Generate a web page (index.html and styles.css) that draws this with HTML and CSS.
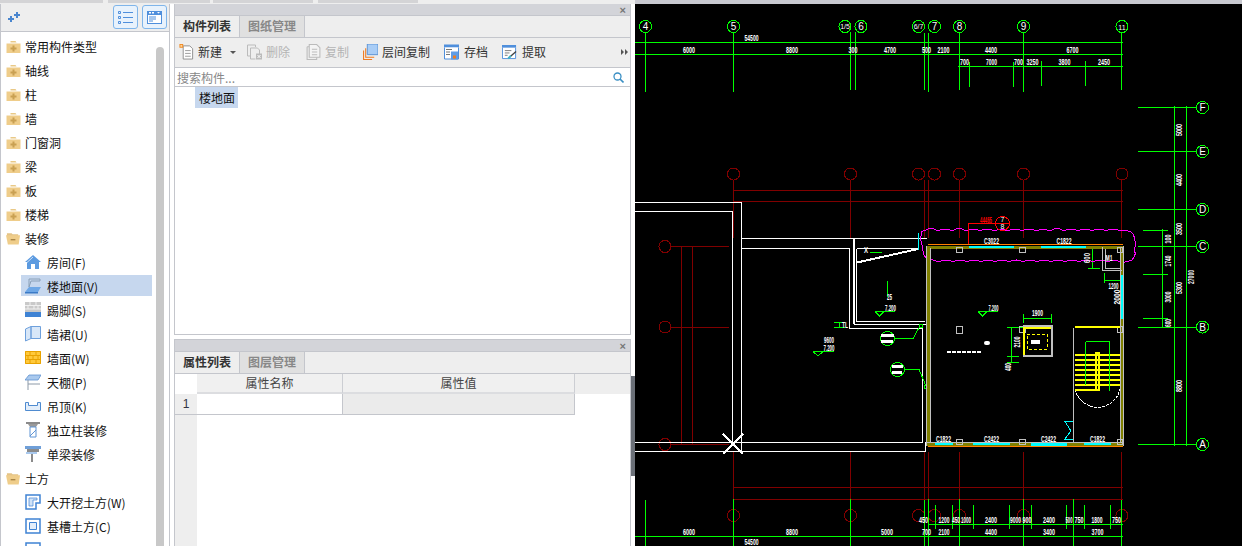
FILE: index.html
```html
<!DOCTYPE html>
<html lang="zh">
<head>
<meta charset="utf-8">
<title>构件列表</title>
<link rel="stylesheet" href="styles.css">
</head>
<body>
<svg class="sprite" aria-hidden="true">
  <defs>
    <symbol id="folder" viewBox="0 0 14 13"><path d="M4 1h5l1 1.5H4z" fill="#e9c987"/><path d="M0 3.500h14V13H0z" fill="#efcd8a"/><path d="M6 5.500h2v2h2v2H8v2H6v-2H4v-2h2z" fill="#c9a052"/></symbol>
    <symbol id="folder-open" viewBox="0 0 16 13"><path d="M1 1h5l1 1h6v2H1z" fill="#e4c386"/><path d="M0 3h15l-1.500 10H2z" fill="#efcd8a"/><path d="M5 7h5v1.500H5z" fill="#a98647"/></symbol>
    <symbol id="i-room" viewBox="0 0 16 16"><path d="M8 1L0 8h2v7h4v-5h4v5h4V8h2z" fill="#5b9ae0"/><path d="M8 3L2 8.500" stroke="#cfe2f7" fill="none"/></symbol>
    <symbol id="i-floor" viewBox="0 0 16 16"><path d="M4 1h11v2H6L4 9z" fill="none" stroke="#8aa0b8"/><path d="M4 9h12l-3 5H0z" fill="#6ea7e6"/><path d="M0 14h13v1.500H0z" fill="#3b7ac6"/></symbol>
    <symbol id="i-base" viewBox="0 0 16 16"><path d="M0 0h16v10H0z" fill="#c9c9c9"/><path d="M0 3.500h16M0 7h16M5 0v3.500M11 0v3.500M3 3.500V7M9 3.500V7M13 3.500V7" stroke="#f0f0f0" fill="none"/><path d="M0 10h16v5H0z" fill="#3f83d4"/></symbol>
    <symbol id="i-dado" viewBox="0 0 16 16"><path d="M.5 3L6 .5v12L.5 15zM6 .5h9.500V12.500H6z" fill="#d8e7f8" stroke="#6ea0dc"/></symbol>
    <symbol id="i-wall" viewBox="0 0 16 14"><path d="M0 0h16v13H0z" fill="#ffc93c"/><path d="M.5.5h15v12H.5zM0 4.500h16M0 8.500h16M5 .5v4M11 .5v4M3 4.500v4M8 4.500v4M13 4.500v4M5 8.500v4M11 8.500v4" fill="none" stroke="#e8a200"/></symbol>
    <symbol id="i-ceil" viewBox="0 0 16 16"><path d="M4 1h12l-3 5H0z" fill="#a9c9ee" stroke="#5f92cf" stroke-width=".8"/><path d="M3 6v10M3 10h12" stroke="#8d9aa8" fill="none"/></symbol>
    <symbol id="i-hang" viewBox="0 0 16 16"><path d="M.5 4.500h3v3h9v-3h3v8H.5z" fill="#e3eefa" stroke="#4f8bd0"/></symbol>
    <symbol id="i-col" viewBox="0 0 16 16"><path d="M1 0h14v2H1z" fill="#8b8b8b"/><path d="M3 2h10l-2 3H5z" fill="#9a9a9a"/><path d="M5 5h6v10H5z" fill="#fff" stroke="#5e94d4"/><path d="M5 14l6-6" stroke="#5e94d4"/></symbol>
    <symbol id="i-beam" viewBox="0 0 16 16"><path d="M0 0h16v3H0z" fill="#6f9fd8"/><path d="M2 3h12v3H2z" fill="#8b8b8b"/><path d="M1 6h11v2H1z" fill="#a9c9ee"/><path d="M7 8v8" stroke="#8b8b8b" stroke-width="2"/></symbol>
    <symbol id="i-dig" viewBox="0 0 16 16"><path d="M1 1h14v8h-4v6H1z" fill="#fff" stroke="#3f83d4" stroke-width="1.500"/><path d="M4 4h8v2H8v6H4z" fill="#cfe2f7" stroke="#3f83d4" stroke-width=".7"/></symbol>
    <symbol id="i-trench" viewBox="0 0 16 16"><path d="M1 1h14v14H1z" fill="#fff" stroke="#3f83d4" stroke-width="1.500"/><path d="M4.500 4.500h7v7h-7z" fill="#e3eefa" stroke="#3f83d4"/></symbol>
    <symbol id="t-new" viewBox="0 0 15 17"><path d="M4 2h7l3 3v11H4z" fill="#fff" stroke="#8e8e8e"/><path d="M6 7h6M6 10h6M6 13h6" stroke="#9a9a9a"/><path d="M0 0h4v4H0z" fill="#f08a24"/><path d="M1 1h2v2H1z" fill="#ffd79c"/></symbol>
    <symbol id="t-del" viewBox="0 0 15 15"><path d="M.5.5h8v2M.5.5v11h3" fill="none" stroke="#bbb"/><path d="M3.500 3.500h7l2 2v4M3.500 3.500v11h5" fill="none" stroke="#bbb"/><path d="M9 9h6v6H9z" fill="#bbb"/><path d="M10.500 10.500l3 3m0-3l-3 3" stroke="#fff"/></symbol>
    <symbol id="t-copy" viewBox="0 0 13 15"><path d="M.5 2.500h2M.5 2.500v12h9v-2" fill="none" stroke="#bbb"/><path d="M2.500.5h7l3 3v9h-10z" fill="#f4f4f4" stroke="#bbb"/><path d="M5 5h5M5 7.500h5M5 10h5" stroke="#bbb"/></symbol>
    <symbol id="t-floor" viewBox="0 0 14 15"><path d="M.5 6v8.500h8M2.500 4v8.500h8" fill="none" stroke="#ee7b22"/><path d="M4 0h10v10H4z" fill="#a9cdf6" stroke="#4f8bd0" stroke-width=".8"/></symbol>
    <symbol id="t-save" viewBox="0 0 15 15"><path d="M0 0h15v3H0z" fill="#4f8fdc"/><path d="M.5 3v11.500h14V3" fill="#fff" stroke="#4f8fdc"/><path d="M2 5h6M2 7.500h4M2 10h4" stroke="#777"/><path d="M7 7h7v8H7z" fill="#5f9de6"/><path d="M9 11h3v3H9z" fill="#f07d20"/></symbol>
    <symbol id="t-pick" viewBox="0 0 16 15"><path d="M0 0h15v3H0z" fill="#4f8fdc"/><path d="M.5 3v11.500h14V3" fill="#fff" stroke="#4f8fdc"/><path d="M3 6h7M3 8.500h5M3 11h3" stroke="#777"/><path d="M7 14l8-7" stroke="#444" stroke-width="1.500"/><path d="M6.500 14.500l3-3" stroke="#3fb6c6" stroke-width="2"/></symbol>
  </defs>
</svg>
<div class="app">
  <div class="strip"><span class="seg seg-a"></span><span class="seg seg-b"></span><span class="seg seg-c"></span><span class="seg seg-d"></span><span class="seg seg-e"></span></div>
  <div class="main">
    <aside class="tree-panel">
      <div class="tree-bar">
        <svg class="sparkle" viewBox="0 0 13 10"><path d="M3 4h2v2h2v2H5v2H3V8H1V6h2zM9 0h2v2h2v2h-2v2H9V4H7V2h2z" fill="#4a86cf"/></svg>
        <span class="spacer"></span>
        <button class="view-btn"><svg viewBox="0 0 15 13" class="view-ic"><path d="M.5.5h2v2h-2zM.5 5.500h2v2h-2zM.5 10.500h2v2h-2z" fill="none" stroke="#4f8fdc"/><path d="M5 1.500h10M5 6.500h10M5 11.500h10" stroke="#4f8fdc"/></svg></button>
        <button class="view-btn"><svg viewBox="0 0 15 13" class="view-ic"><path d="M0 0h15v13H0z" fill="#4f8fdc"/><path d="M1 4h13v8H1z" fill="#fff"/><path d="M2 6h7M2 8h7M2 10h4" stroke="#4f8fdc"/><path d="M2 1h2v1.500H2zM5 1h2v1.500H5zM10 1h3l-1.500 1.500z" fill="#fff"/></svg></button>
      </div>
      <div class="tree-body">
        <ul class="tree">
          <li class="row"><svg class="fold"><use href="#folder"/></svg>常用构件类型</li>
          <li class="row"><svg class="fold"><use href="#folder"/></svg>轴线</li>
          <li class="row"><svg class="fold"><use href="#folder"/></svg>柱</li>
          <li class="row"><svg class="fold"><use href="#folder"/></svg>墙</li>
          <li class="row"><svg class="fold"><use href="#folder"/></svg>门窗洞</li>
          <li class="row"><svg class="fold"><use href="#folder"/></svg>梁</li>
          <li class="row"><svg class="fold"><use href="#folder"/></svg>板</li>
          <li class="row"><svg class="fold"><use href="#folder"/></svg>楼梯</li>
          <li class="row"><svg class="fold"><use href="#folder-open"/></svg>装修</li>
          <li class="row child"><svg class="leaf"><use href="#i-room"/></svg>房间(F)</li>
          <li class="row child selected"><svg class="leaf"><use href="#i-floor"/></svg>楼地面(V)</li>
          <li class="row child"><svg class="leaf"><use href="#i-base"/></svg>踢脚(S)</li>
          <li class="row child"><svg class="leaf"><use href="#i-dado"/></svg>墙裙(U)</li>
          <li class="row child"><svg class="leaf"><use href="#i-wall"/></svg>墙面(W)</li>
          <li class="row child"><svg class="leaf"><use href="#i-ceil"/></svg>天棚(P)</li>
          <li class="row child"><svg class="leaf"><use href="#i-hang"/></svg>吊顶(K)</li>
          <li class="row child"><svg class="leaf"><use href="#i-col"/></svg>独立柱装修</li>
          <li class="row child"><svg class="leaf"><use href="#i-beam"/></svg>单梁装修</li>
          <li class="row"><svg class="fold"><use href="#folder-open"/></svg>土方</li>
          <li class="row child"><svg class="leaf"><use href="#i-dig"/></svg>大开挖土方(W)</li>
          <li class="row child"><svg class="leaf"><use href="#i-trench"/></svg>基槽土方(C)</li>
          <li class="row child"><svg class="leaf"><use href="#i-trench"/></svg></li>
        </ul>
        <div class="scroll"></div>
      </div>
    </aside>

    <section class="mid">
      <div class="panel panel-top">
        <div class="title-bar"><span class="close">×</span></div>
        <div class="tabs"><span class="tab active">构件列表</span><span class="tab">图纸管理</span></div>
        <div class="tools">
          <span class="tool t1"><svg class="tic"><use href="#t-new"/></svg>新建<i class="caret"></i></span>
          <span class="tool off t2"><svg class="tic"><use href="#t-del"/></svg>删除</span>
          <span class="tool off t3"><svg class="tic"><use href="#t-copy"/></svg>复制</span>
          <span class="tool t4"><svg class="tic"><use href="#t-floor"/></svg>层间复制</span>
          <span class="tool t5"><svg class="tic"><use href="#t-save"/></svg>存档</span>
          <span class="tool t6"><svg class="tic"><use href="#t-pick"/></svg>提取</span>
          <svg class="more" viewBox="0 0 7 6"><path d="M0 0l3 3-3 3zM4 0l3 3-3 3z" fill="#555"/></svg>
        </div>
        <div class="search"><span class="ph">搜索构件...</span><svg class="mag" viewBox="0 0 11 11"><circle cx="4.500" cy="4.500" r="3.500" fill="none" stroke="#3a8fc4" stroke-width="1.300"/><path d="M7 7l3.500 3.500" stroke="#3a8fc4" stroke-width="1.600"/></svg></div>
        <div class="list"><span class="list-item">楼地面</span></div>
      </div>
      <div class="panel panel-bot">
        <div class="title-bar"><span class="close">×</span></div>
        <div class="tabs"><span class="tab active">属性列表</span><span class="tab">图层管理</span></div>
        <div class="grid">
          <div class="g-corner"></div>
          <div class="g-head">属性名称</div>
          <div class="g-head">属性值</div>
          <div class="g-fill"></div>
          <div class="g-num">1</div>
          <div class="g-cell"></div>
          <div class="g-cell shade"></div>
          <div class="g-blank"></div>
          <div class="g-rest"></div>
          <div class="g-empty"></div>
        </div>
      </div>
    </section>

    <div class="gutter"><div class="handle"></div></div>

    <div class="cad">
      <svg class="cad-svg" viewBox="635 4 607 542" xmlns="http://www.w3.org/2000/svg">
        <!-- dark red axis layer -->
        <g class="ln dred">
          <circle cx="733.5" cy="174" r="6"/><circle cx="850.5" cy="174" r="6"/><circle cx="918.5" cy="174" r="6"/><circle cx="934.5" cy="174" r="6"/><circle cx="959.5" cy="174" r="6"/><circle cx="1023.5" cy="174" r="6"/><circle cx="1122" cy="174" r="6"/>
          <circle cx="733.5" cy="515.500" r="6"/><circle cx="850.5" cy="515.500" r="6"/><circle cx="918.5" cy="515.500" r="6"/><circle cx="934.5" cy="515.500" r="6"/><circle cx="959.5" cy="515.500" r="6"/><circle cx="1023.5" cy="515.500" r="6"/><circle cx="1122" cy="515.500" r="6"/>
          <circle cx="665" cy="246.500" r="6"/><circle cx="665" cy="327" r="6"/><circle cx="665" cy="444.500" r="6"/>
          <path d="M733.5 180V238M850.5 180V238M924.5 180V238M928.5 180V238M959.5 180V238M1023.5 180V238M1121.5 180V238M733 190.500H1122.500M733 201.500H1122.500M671 246.500H728.500M671 327.500H728.500M671 444.500H728.500M681.500 246V444M692.500 246V444M733.5 452V499M850.5 452V499M924.500 452V505M928.500 452V499M959.5 452V499M1023.5 452V499M1121.5 452V499M733 487.500H1122.500M733 499.500H1122.500"/>
        </g>
        <!-- white building outline -->
        <g class="ln white">
          <path d="M635 202.500H741.500V451.500M635 211.500H732.500V442.500M635 442.500H922.500V328.500H849.500V248.500H741.500M635 451.500H925.500V442M741.500 238.500H926.500M854 238.500V324.500H926M856.500 248.500V321.500H925M856.500 248.500H917"/>
          <path class="thick" d="M723 434L743 454M743 434L723 454M857 262.500L918 249M853.500 238.500V324"/>
          <path d="M1075 389a23 23 0 0 0 45 0" stroke-dasharray="3 1"/>
        </g>
        <!-- green axis layer -->
        <g class="ln green">
          <circle cx="645.5" cy="26.500" r="6"/><circle cx="733.5" cy="26.500" r="6"/><circle cx="845" cy="26.500" r="6"/><circle cx="861" cy="26.500" r="6"/><circle cx="918.5" cy="26.500" r="6"/><circle cx="934.500" cy="26.500" r="6"/><circle cx="959.5" cy="26.500" r="6"/><circle cx="1023.5" cy="26.500" r="6"/><circle cx="1122" cy="26.500" r="6"/>
          <circle cx="1202.500" cy="107.500" r="6"/><circle cx="1202.500" cy="151.500" r="6"/><circle cx="1202.500" cy="209.500" r="6"/><circle cx="1202.500" cy="246.500" r="6"/><circle cx="1202.500" cy="327" r="6"/><circle cx="1202.500" cy="444.500" r="6"/>
          <circle cx="887.5" cy="338.500" r="7"/><circle cx="897.500" cy="369.500" r="7"/>
          <path d="M645.5 33V92M733.5 33V92M850.5 32V90M855.5 32V90M924.5 33V90M928.5 33V92M959.5 33V90M1023.5 33V92M1121.5 33V90M635 42.500H1122.500M635 54.500H1122.500M958 66.500H1123M969.5 62V87M1013.5 62V87M1041.5 61V86M1085.5 61V86"/>
          <path d="M1138 107.500H1196M1138 151.500H1196M1138 209.500H1196M1138 246.500H1196M1138 327.500H1196M1138 444.500H1196M1174.500 106V446M1186.500 106V446M1162.500 229V327M1143 230.500H1168M1143 274.500H1168M1143 318.500H1168"/>
          <path d="M645.5 500V546M733.5 499V546M850.5 499V546M924.5 500V546M928.5 499V546M959.5 499V546M1023.5 499V546M1073.5 499V546M1121.5 500V546M635 536.500H1122.500M928 524.500H1122.500M935.5 505V529M952.5 505V529M973.5 505V529M1009.5 505V529M1031.5 505V529M1066.500 505V529M1084.500 505V529M1110.500 505V529"/>
          <path d="M894 338.500H913L920 326M904 369.500H919L926 386M870 252.500H882M887.500 281V297M875 311.500H895M875 311.500L879.500 316L884 311.500M834 322.500H845M834 327.500H845M839.500 322.500V327.500M813 351.500H834M813 351.500L818 356L823 351.500"/>
          <path d="M978 311.500H998M978 311.500L982.500 316L987 311.500M1023.500 318.500H1051.500M1023.500 314V323M1051.500 314V323M1007 327.500H1023M1011.500 327V362M1007 356.500H1019M1007 362.500H1019"/>
          <path d="M1088 246.500H1100M1092.500 246V268M1088 268.500H1100M1104.500 273V283M1104.500 280.500H1122"/>
          <rect x="919" y="324" width="3" height="3"/><rect x="924" y="385" width="3" height="3"/>
        </g>
        <!-- cloud -->
        <path class="ln magenta" d="M924 231q7-5 14 0q7-4 14 0q7-5 14 0q7-4 14 0q7-4 14 0q7-3 14 0q7-4 14 0q7-4 14 0q7-3 14 0q7-5 14 0q7-4 14 0q7-4 14 0q7-4 14 0q7-4 14 0q7-1 11 1q4 3 3 7q3 5 0 10q3 6-2 11q-6 3-11 2q-7-3-14 0q-7-4-14 0q-7-4-14 0q-7-4-14 0q-7-4-14 0q-7-4-14 0q-7-4-14 0q-7-4-14 0q-7-4-14 0q-7-4-14 0q-7-4-14 0q-7-4-14 0q-7-4-14 0q-6-2-13-4q-4-5-3-10q-3-6-2-12q0-6 3-5z"/>
        <!-- walls -->
        <g class="ln">
          <rect class="olive" x="928" y="247" width="194" height="197"/>
          <path class="orange" d="M928 244.500H1122.500M928 446.500H1122.500"/>
          <path class="grey" d="M926.500 246V446M930.500 248V442M1120.500 248V442M1123.500 246V446M927 442.500H1123M1073.500 328V443M1102.500 247V270H1122M1105 249V268H1120"/>
          <g class="grey"><rect x="956" y="247" width="6" height="5"/><rect x="1019" y="247" width="6" height="5"/><rect x="1117" y="247" width="5" height="5"/><rect x="956" y="439" width="6" height="5"/><rect x="1019" y="439" width="6" height="5"/><rect x="1117" y="439" width="5" height="5"/><rect x="1117" y="326" width="5" height="6"/><rect x="956.500" y="326" width="6" height="7"/><rect x="1019" y="326" width="6" height="6"/></g>
          <path class="cyan thick" d="M969 247H1014M1041 247H1086M935 444H953M973 444H1010M1084 444H1111M1122 275V319"/>
          <path class="cyan thicker" d="M1031 444H1067"/>
          <path class="cyan" d="M1073 421.500H1065L1071 431L1065 439H1073M918.500 233V250"/>
        </g>
        <!-- lift + stair -->
        <g class="ln">
          <path class="grey thick" d="M1023 326H1052V356H1024V326"/>
          <path class="yellow thick" d="M1024 327V355M1025 327.500H1051"/>
          <rect class="yellow dash" x="1027" y="334" width="20" height="15"/>
          <path class="yellow thick" d="M1075 327H1120"/>
          <path class="yellow thick" d="M1075 355H1120M1075 360H1120M1075 365H1120M1075 370H1120M1075 375H1120M1075 380H1120M1075 385H1120M1075 390H1100"/>
          <rect class="yellow thick" x="1096" y="353" width="3" height="37"/>
        </g>
        <path class="ln green" d="M1085.500 342V385M1085.500 341.500H1110M1109.500 342V391"/>
        <!-- red tag -->
        <g class="ln red">
          <circle cx="1002.500" cy="223.500" r="7"/>
          <path d="M968.500 244V223.500H1009"/>
        </g>
        <rect class="blob" x="984" y="341" width="6" height="4" rx="2"/>
        <path class="ln white dots" d="M947 351.500H981"/>
        <rect class="blob" x="1031" y="340" width="9" height="4"/>
        <rect class="blob" x="881" y="334" width="13" height="3"/><rect class="blob" x="881" y="340" width="12" height="3"/>
        <rect class="blob" x="892" y="365" width="11" height="3"/><rect class="blob" x="892" y="371" width="10" height="3"/>
        <!-- texts -->
        <g class="tx" transform="translate(0 1)">
          <text class="ax" x="645.500" y="29">4</text><text class="ax" x="733.500" y="29">5</text><text class="ax sm" x="845" y="28">1/5</text><text class="ax" x="861" y="29">6</text><text class="ax sm" x="918.500" y="28">6/7</text><text class="ax" x="934.500" y="29">7</text><text class="ax" x="959.500" y="29">8</text><text class="ax" x="1023.500" y="29">9</text><text class="ax sm" x="1122" y="28.500">11</text>
          <text class="ax" x="1202.500" y="110">F</text><text class="ax" x="1202.500" y="154">E</text><text class="ax" x="1202.500" y="212">D</text><text class="ax" x="1202.500" y="249">C</text><text class="ax" x="1202.500" y="330">B</text><text class="ax" x="1202.500" y="447">A</text>
          <text x="751.500" y="40" textLength="14" lengthAdjust="spacingAndGlyphs">54500</text>
          <text x="689" y="52" textLength="12" lengthAdjust="spacingAndGlyphs">6000</text><text x="792" y="52" textLength="12" lengthAdjust="spacingAndGlyphs">8800</text><text x="853" y="52" textLength="9" lengthAdjust="spacingAndGlyphs">300</text><text x="890" y="52" textLength="12" lengthAdjust="spacingAndGlyphs">4700</text><text x="926.500" y="52" textLength="9" lengthAdjust="spacingAndGlyphs">500</text><text x="943.500" y="52" textLength="12" lengthAdjust="spacingAndGlyphs">2100</text><text x="991" y="52" textLength="12" lengthAdjust="spacingAndGlyphs">4400</text><text x="1072.500" y="52" textLength="12" lengthAdjust="spacingAndGlyphs">6700</text>
          <text x="964.500" y="64" textLength="9" lengthAdjust="spacingAndGlyphs">700</text><text x="991.500" y="64" textLength="11" lengthAdjust="spacingAndGlyphs">7000</text><text x="1018.500" y="64" textLength="9" lengthAdjust="spacingAndGlyphs">700</text><text x="1032.500" y="64" textLength="12" lengthAdjust="spacingAndGlyphs">3250</text><text x="1064.500" y="64" textLength="12" lengthAdjust="spacingAndGlyphs">3800</text><text x="1104" y="64" textLength="12" lengthAdjust="spacingAndGlyphs">2450</text>
          <text x="923.500" y="522" textLength="9" lengthAdjust="spacingAndGlyphs">450</text><text x="944" y="522" textLength="11" lengthAdjust="spacingAndGlyphs">1200</text><text x="956" y="522" textLength="8" lengthAdjust="spacingAndGlyphs">450</text><text x="966" y="522" textLength="10" lengthAdjust="spacingAndGlyphs">1000</text><text x="991" y="522" textLength="12" lengthAdjust="spacingAndGlyphs">2400</text><text x="1015.500" y="522" textLength="11" lengthAdjust="spacingAndGlyphs">9000</text><text x="1027" y="522" textLength="9" lengthAdjust="spacingAndGlyphs">900</text><text x="1049" y="522" textLength="12" lengthAdjust="spacingAndGlyphs">2400</text><text x="1069" y="522" textLength="7" lengthAdjust="spacingAndGlyphs">500</text><text x="1079" y="522" textLength="9" lengthAdjust="spacingAndGlyphs">750</text><text x="1097" y="522" textLength="11" lengthAdjust="spacingAndGlyphs">1800</text><text x="1116.500" y="522" textLength="9" lengthAdjust="spacingAndGlyphs">750</text>
          <text x="689" y="534" textLength="12" lengthAdjust="spacingAndGlyphs">6000</text><text x="792" y="534" textLength="12" lengthAdjust="spacingAndGlyphs">8800</text><text x="887" y="534" textLength="12" lengthAdjust="spacingAndGlyphs">5000</text><text x="926.500" y="534" textLength="9" lengthAdjust="spacingAndGlyphs">700</text><text x="944" y="534" textLength="11" lengthAdjust="spacingAndGlyphs">2100</text><text x="991" y="534" textLength="12" lengthAdjust="spacingAndGlyphs">4400</text><text x="1049" y="534" textLength="12" lengthAdjust="spacingAndGlyphs">3400</text><text x="1097.500" y="534" textLength="12" lengthAdjust="spacingAndGlyphs">3700</text>
          <text x="751.500" y="544" textLength="14" lengthAdjust="spacingAndGlyphs">54500</text>
          <text x="991.500" y="243" textLength="15" lengthAdjust="spacingAndGlyphs">C3022</text><text x="1064" y="243" textLength="15" lengthAdjust="spacingAndGlyphs">C1822</text>
          <text x="943.500" y="441" textLength="15" lengthAdjust="spacingAndGlyphs">C1822</text><text x="991.500" y="441" textLength="15" lengthAdjust="spacingAndGlyphs">C2422</text><text x="1048.500" y="441" textLength="15" lengthAdjust="spacingAndGlyphs">C2422</text><text x="1097.500" y="441" textLength="15" lengthAdjust="spacingAndGlyphs">C1822</text>
          <text x="993.500" y="310" textLength="10" lengthAdjust="spacingAndGlyphs">7.200</text><text x="1037.500" y="315" textLength="11" lengthAdjust="spacingAndGlyphs">1900</text><text x="1113.500" y="288" textLength="10" lengthAdjust="spacingAndGlyphs">1200</text><text x="1109" y="260" textLength="7" lengthAdjust="spacingAndGlyphs">M1</text>
          <text x="890.500" y="310" textLength="11" lengthAdjust="spacingAndGlyphs">7.200</text><text x="829" y="350" textLength="11" lengthAdjust="spacingAndGlyphs">7.200</text><text x="829" y="342" textLength="10" lengthAdjust="spacingAndGlyphs">9600</text><text x="845" y="327" textLength="6" lengthAdjust="spacingAndGlyphs">TL</text><text x="889.500" y="299" textLength="5" lengthAdjust="spacingAndGlyphs">25</text><text x="866" y="252" textLength="4" lengthAdjust="spacingAndGlyphs">X</text>
          <text class="tred" x="986" y="222" textLength="12" lengthAdjust="spacingAndGlyphs">44465</text>
          <text class="ax sm" x="1002.500" y="221">7</text><text class="ax sm" x="1002.500" y="228">8</text>
          <text transform="rotate(-90 1179 129)" x="1179" y="132" textLength="12" lengthAdjust="spacingAndGlyphs">5000</text>
          <text transform="rotate(-90 1179 179)" x="1179" y="182" textLength="12" lengthAdjust="spacingAndGlyphs">4400</text>
          <text transform="rotate(-90 1179 228)" x="1179" y="231" textLength="12" lengthAdjust="spacingAndGlyphs">3500</text>
          <text transform="rotate(-90 1179 287)" x="1179" y="290" textLength="12" lengthAdjust="spacingAndGlyphs">5300</text>
          <text transform="rotate(-90 1179 385)" x="1179" y="388" textLength="12" lengthAdjust="spacingAndGlyphs">8800</text>
          <text transform="rotate(-90 1191 276)" x="1191" y="279" textLength="14" lengthAdjust="spacingAndGlyphs">27000</text>
          <text transform="rotate(-90 1168 238)" x="1168" y="241" textLength="9" lengthAdjust="spacingAndGlyphs">100</text>
          <text transform="rotate(-90 1168 260)" x="1168" y="263" textLength="11" lengthAdjust="spacingAndGlyphs">1740</text>
          <text transform="rotate(-90 1168 296)" x="1168" y="299" textLength="11" lengthAdjust="spacingAndGlyphs">3000</text>
          <text transform="rotate(-90 1168 322)" x="1168" y="325" textLength="8" lengthAdjust="spacingAndGlyphs">600</text>
          <text transform="rotate(-90 1087 257)" x="1087" y="260" textLength="10" lengthAdjust="spacingAndGlyphs">600</text>
          <text transform="rotate(-90 1117 296)" x="1117" y="299" textLength="15" lengthAdjust="spacingAndGlyphs">2000</text>
          <text transform="rotate(-90 1017 341)" x="1017" y="344" textLength="11" lengthAdjust="spacingAndGlyphs">2100</text>
          <text transform="rotate(-90 1008 366)" x="1008" y="369" textLength="8" lengthAdjust="spacingAndGlyphs">400</text>
        </g>
      </svg>
    </div>
  </div>
</div>
</body>
</html>
```
FILE: styles.css
```css
* { box-sizing: border-box; }
html, body { margin: 0; padding: 0; height: 100%; overflow: hidden; background: #fff; }
body { font-family: "Noto Sans CJK SC", "Noto Sans", sans-serif; font-size: 12px; color: #222; }
.sprite { display: none; }
ul { list-style: none; margin: 0; padding: 0; }

.app { width: 1242px; height: 546px; display: flex; flex-direction: column; }
.strip { height: 4px; flex: none; display: flex; background: #eeeeee; }
.seg { height: 3px; background: #d4d4d6; }
.seg-a { width: 103px; }
.seg-b { width: 102px; margin-left: 5px; }
.seg-c { width: 100px; margin-left: 3px; }
.seg-d { width: 100px; margin-left: 5px; }
.seg-e { flex: 1; height: 4px; margin-left: 217px; background: #c8c9d0; }
.main { flex: 1; min-height: 0; display: flex; border-top: 0; }

/* left tree */
.tree-panel { width: 170px; flex: none; margin-right: 4px; display: flex; flex-direction: column; border-left: 1px solid #c4c6cc; border-right: 1px solid #c4c6cc; }
.tree-bar { height: 28px; flex: none; display: flex; align-items: center; padding: 0 2px 1px 6px; gap: 4px; background: #eeeeee; border-bottom: 1px solid #c4c6cc; }
.sparkle { width: 13px; height: 10px; }
.spacer { flex: 1; }
.view-btn { width: 25px; height: 24px; padding: 0; display: flex; align-items: center; justify-content: center; background: #e8f2fc; border: 1px solid #7fb5ea; border-radius: 3px; }
.view-ic { width: 15px; height: 13px; }
.tree-body { flex: 1; min-height: 0; display: flex; overflow: hidden; position: relative; background: #fff; }
.tree { flex: 1; padding-top: 2px; }
.row { height: 24px; display: flex; align-items: center; padding-left: 5px; color: #111; white-space: nowrap; }
.fold { width: 15px; height: 13px; margin-right: 4px; flex: none; }
.child { padding-left: 24px; }
.leaf { width: 16px; height: 16px; margin-right: 6px; flex: none; }
.child.selected { width: 131px; height: 21px; margin: 1px 0 2px 20px; padding: 1px 0 0 4px; background: #c6d7ee; }
.scroll { position: absolute; left: 155px; top: 15px; bottom: 0; width: 8px; background: #c8c8c8; border-radius: 4px 4px 0 0; }

/* middle panels */
.mid { width: 457px; flex: none; display: flex; flex-direction: column; gap: 4px; }
.panel { display: flex; flex-direction: column; border: 1px solid #c4c6cc; border-top: 0; background: #fff; }
.panel-top { height: 331px; }
.panel-bot { flex: 1; min-height: 0; border-top: 1px solid #c4c6cc; border-bottom: 0; }
.title-bar { height: 12px; flex: none; background: #d3d4d9; display: flex; justify-content: flex-end; align-items: center; padding-right: 4px; border-bottom: 1px solid #c4c6cc; }
.close { font: bold 11px/10px "Liberation Sans", sans-serif; color: #777; }
.tabs { height: 22px; flex: none; display: flex; background: #eeeeee; border-bottom: 1px solid #c4c6cc; }
.tab { width: 65px; text-align: center; line-height: 20px; font-weight: 700; color: #888; background: #e0e0e0; border-right: 1px solid #c4c6cc; }
.tab.active { width: 65px; color: #333; background: #eeeeee; }
.tools { height: 30px; flex: none; display: flex; align-items: center; background: #eeeeee; border-bottom: 1px solid #c4c6cc; padding: 0 0 2px 4px; }
.tool { display: flex; align-items: center; color: #333; white-space: nowrap; }
.tool.off { color: #b4b4b4; }
.tic { width: 15px; height: 16px; margin-right: 4px; flex: none; }
.t2 { margin-left: 11px; }
.t3 { margin-left: 16px; }
.t4 { margin-left: 14px; }
.t5 { margin-left: 14px; }
.t6 { margin-left: 14px; }
.t5 .tic, .t6 .tic { margin-right: 5px; }
.caret { width: 0; height: 0; margin: 1px 0 0 8px; border: 3px solid transparent; border-top: 3px solid #555; border-bottom: 0; }
.more { width: 7px; height: 6px; margin-left: auto; margin-right: 2px; }
.search { height: 19px; flex: none; display: flex; align-items: center; justify-content: space-between; padding: 0 6px 0 2px; border-bottom: 1px solid #c4c6cc; background: #fff; }
.ph { color: #888; }
.mag { width: 11px; height: 11px; }
.list { flex: 1; padding: 0 0 0 20px; }
.list-item { display: inline-block; height: 21px; line-height: 21px; padding: 0 0 0 4px; width: 43px; background: #c6d7ee; color: #111; }

/* property grid */
.grid { flex: 1; min-height: 0; display: grid; grid-template-columns: 22px 146px 232px 1fr; grid-template-rows: 20px 21px 1fr; }
.g-corner { background: #fff; }
.g-head { background: #f0f0f0; text-align: center; line-height: 18px; color: #444; border-right: 1px solid #ccced3; border-bottom: 2px solid #dcdde0; }
.g-fill { background: #eeeeee; }
.g-num { background: #eeeeee; text-align: center; line-height: 20px; font-family: "Liberation Sans", sans-serif; font-size: 12px; color: #334; border-bottom: 1px solid #c4c6cc; }
.g-cell { background: #fff; border-right: 1px solid #c4c6cc; border-bottom: 1px solid #c4c6cc; }
.g-cell.shade { background: #ebebeb; }
.g-rest { background: #eeeeee; }
.g-empty { grid-column: 2 / 5; background: #fff; }

/* gutter */
.gutter { width: 4px; flex: none; position: relative; background: #fff; }
.handle { position: absolute; left: 0; top: 372px; width: 4px; height: 100px; background: #6b7078; }

/* CAD canvas */
.cad { flex: 1; min-width: 0; background: #000; overflow: hidden; }
.cad-svg { display: block; width: 607px; height: 542px; }
.ln, .ln * { fill: none; stroke-width: 1; shape-rendering: crispEdges; }
.dred, .dred * { stroke: #800000; }
.white, .white * { stroke: #fff; }
.green, .green * { stroke: #00ff00; }
.magenta { stroke: #ff00ff; }
.orange { stroke: #ff8000; }
.ln .olive { stroke: #808000; stroke-width: 3; }
.grey, .grey * { stroke: #c0c0c0; }
.cyan { stroke: #00ffff; }
.yellow { stroke: #ffff00; }
.red, .red * { stroke: #ff0000; }
.ln .thick { stroke-width: 2; }
.ln .thicker { stroke-width: 3; }
.dash { stroke-dasharray: 3 2; }
.ln.dots { stroke-width: 2; stroke-dasharray: 4 1; }
.blob { fill: #fff; }
.tx text { font: bold 9px "Liberation Sans", sans-serif; fill: #fff; text-anchor: middle; }
.tx .ax { font-size: 10px; font-weight: 400; }
.tx .sm { font-size: 7px; }
.tx .tred { fill: #ff0000; }
```
